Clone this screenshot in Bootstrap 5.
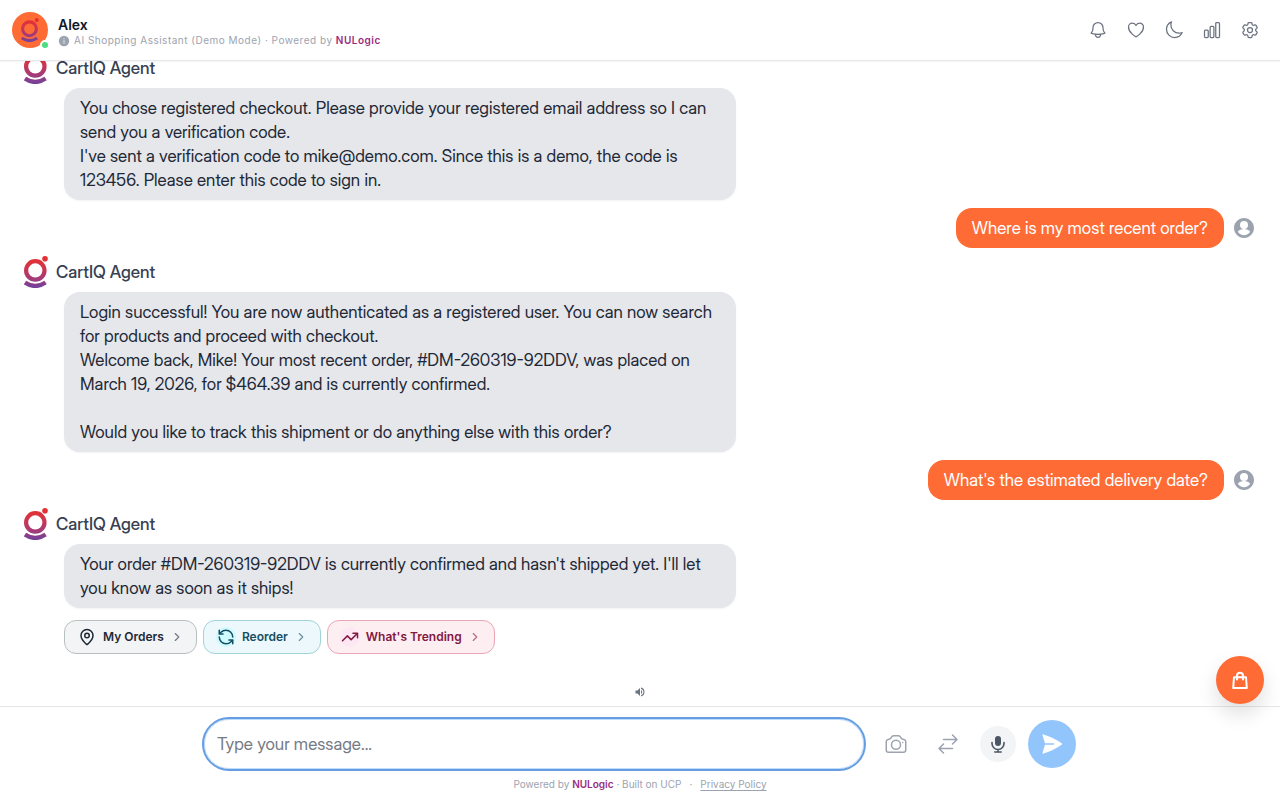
<!DOCTYPE html>
<html lang="en">
<head>
<meta charset="utf-8">
<meta name="viewport" content="width=device-width, initial-scale=1">
<title>CartIQ Agent</title>
<link href="https://cdn.jsdelivr.net/npm/bootstrap@5.3.0/dist/css/bootstrap.min.css" rel="stylesheet">
<style>
  body { font-family: Inter, "Liberation Sans", sans-serif; font-size: 16px; line-height: 24px; color: #1f2937; background: #fff; }
  svg { display: block; flex: none; }
  .line-icon { fill: none; stroke: currentColor; stroke-width: 1.5; stroke-linecap: round; stroke-linejoin: round; }
  .bold-line { stroke-width: 2; }
  .topbar { min-height: 61px; padding: 0 15px 0 12px; border-bottom: 1px solid #e5e7eb; box-shadow: 0 1px 2px rgba(0,0,0,.05); z-index: 2; background: #fff; }
  .identity { gap: 10px; }
  .avatar { width: 36px; height: 36px; background: #ff6b35; }
  .online { width: 10px; height: 10px; right: -2px; bottom: -2px; background: #4ade80; border: 2px solid #fff; }
  .assistant-name { font-size: 14px; line-height: 17px; font-weight: 600; color: #111827; margin: 0; }
  .tagline { font-size: 10px; line-height: 15px; color: #9ca3af; letter-spacing: .05em; }
  .brand-link { color: #9b2c7e; font-weight: 600; text-decoration: none; }
  .tool { width: 30px; height: 30px; color: #6b7280; }
  .plain { border: 0; background: none; padding: 0; display: flex; align-items: center; justify-content: center; flex: none; }
  .conversation { min-height: 0; }
  .agent-name, .bubble, .message-box { font-family: "Inter Display", Inter, "Liberation Sans", sans-serif; font-size: 17px; line-height: 24px; }
  .agent-name { font-weight: 500; color: #374151; margin: 0; }
  .bubble { border-radius: 16px; padding: 8px 16px; }
  .bubble p { margin: 0; }
  .from-agent { max-width: 672px; margin: 4px 0 0 40px; background: #e5e7eb; box-shadow: 0 1px 2px rgba(0,0,0,.05); }
  .from-user { background: #ff6b35; color: #fff; }
  .user-icon { color: #9ca3af; }
  .chips { gap: 6px; margin: 12px 0 0 40px; }
  .chip { height: 34px; padding: 0 12px; gap: 6px; border: 1px solid; border-radius: 12px; font-size: 12px; line-height: 16px; font-weight: 600; }
  .chip-icon { width: 20px; height: 20px; }
  .chip .chevron { opacity: .6; }
  .chip-orders { color: #1f2937; background: #f3f4f6; border-color: #b8bfbf; }
  .chip-reorder { color: #164e63; background: #ecf8fb; border-color: #a0d3da; }
  .chip-reorder .chip-icon { background: #cffafe; }
  .chip-trend { color: #831843; background: #fdeef2; border-color: #eba5b5; }
  .chip-trend .chip-icon { background: #fce7f3; }
  .sound { width: 20px; height: 20px; margin: 28px auto 4px; color: #6b7280; }
  .composer { border-top: 1px solid #e5e7eb; padding: 12px 12px 8px; }
  .composer-row { max-width: 872px; gap: 12px; }
  .message-box { height: 50px; border: 1px solid #bfdbfe; border-radius: 25px; padding: 0 12px; outline: 2px solid #659de3; color: #1f2937; min-width: 0; }
  .message-box::placeholder { color: #757b86; opacity: 1; }
  .side { width: 40px; height: 40px; color: #9ca3af; }
  .mic { width: 36px; height: 36px; background: #f3f4f6; color: #4b5563; }
  .send { width: 48px; height: 48px; background: #93c5fd; color: #fff; }
  .legal { font-size: 10px; line-height: 15px; margin-top: 8px; color: #9ca3af; }
  .legal .policy { color: #9ca3af; text-underline-offset: 2px; }
  .cart { right: 16px; bottom: 96px; width: 48px; height: 48px; background: #ff6b35; color: #fff; box-shadow: 0 10px 20px rgba(0,0,0,.13); z-index: 3; }
</style>
</head>
<body>
<svg width="0" height="0" class="position-absolute" aria-hidden="true">
  <defs>
    <linearGradient id="brand" gradientUnits="userSpaceOnUse" x1="0" y1="2" x2="0" y2="32">
      <stop offset="0" stop-color="#e5302f"/><stop offset=".3" stop-color="#d1354b"/><stop offset=".7" stop-color="#a43b78"/><stop offset="1" stop-color="#6f429e"/>
    </linearGradient>
    <symbol id="logo" viewBox="0 0 24 32">
      <circle cx="11.3" cy="14.4" r="9.2" fill="none" stroke="url(#brand)" stroke-width="4.2"/>
      <circle cx="21" cy="2.8" r="2.8" fill="url(#brand)"/>
      <path d="M1 26.600Q11.300 33.400 21.600 26.600" fill="none" stroke="url(#brand)" stroke-width="4.200"/>
    </symbol>
    <symbol id="person" viewBox="0 0 24 24">
      <path fill="currentColor" d="M12 2C6.480 2 2 6.480 2 12s4.480 10 10 10 10-4.480 10-10S17.520 2 12 2zm0 3a4 4 0 1 1 0 8 4 4 0 0 1 0-8zm0 14.200c-2.500 0-4.710-1.280-6-3.220.030-1.990 4-3.080 6-3.080s5.970 1.090 6 3.080c-1.290 1.940-3.500 3.220-6 3.220z"/>
    </symbol>
    <symbol id="next" viewBox="0 0 24 24"><path d="m9 18 6-6-6-6"/></symbol>
  </defs>
</svg>

<div class="vh-100 d-flex flex-column overflow-hidden">
  <header class="topbar d-flex align-items-center justify-content-between flex-shrink-0">
    <div class="identity d-flex align-items-center">
      <div class="avatar rounded-circle position-relative d-flex align-items-center justify-content-center flex-shrink-0">
        <svg width="18" height="24" aria-hidden="true"><use href="#logo"/></svg>
        <span class="online rounded-circle position-absolute"></span>
      </div>
      <div class="pt-1">
        <h1 class="assistant-name">Alex</h1>
        <div class="tagline d-flex align-items-center gap-1">
          <svg width="12" height="12" viewBox="0 0 12 12" aria-hidden="true"><circle cx="6" cy="6" r="5.200" fill="#9ca3af"/><path d="M6 3.200v1M6 5.300v3.400" stroke="#e5e7eb" stroke-width="1"/></svg>
          <span>AI Shopping Assistant (Demo Mode) · Powered by <a class="brand-link" href="#">NULogic</a></span>
        </div>
      </div>
    </div>
    <nav class="d-flex gap-2" aria-label="Tools">
      <button class="plain tool" type="button" aria-label="Notifications"><svg class="line-icon" width="20" height="20" viewBox="0 0 24 24"><path d="M14.857 17.082a23.848 23.848 0 0 0 5.454-1.310A8.967 8.967 0 0 1 18 9.750V9A6 6 0 0 0 6 9v.750a8.967 8.967 0 0 1-2.312 6.022c1.733.640 3.560 1.085 5.455 1.310m5.714 0a24.255 24.255 0 0 1-5.714 0m5.714 0a3 3 0 1 1-5.714 0"/></svg></button>
      <button class="plain tool" type="button" aria-label="Favourites"><svg class="line-icon" width="20" height="20" viewBox="0 0 24 24"><path d="M21 8.250c0-2.485-2.099-4.500-4.688-4.500-1.935 0-3.597 1.126-4.312 2.733-.715-1.607-2.377-2.733-4.313-2.733C5.100 3.750 3 5.765 3 8.250c0 7.220 9 12 9 12s9-4.780 9-12Z"/></svg></button>
      <button class="plain tool" type="button" aria-label="Dark mode"><svg class="line-icon" width="20" height="20" viewBox="0 0 24 24"><path d="M21.752 15.002A9.720 9.720 0 0 1 18 15.750c-5.385 0-9.750-4.365-9.750-9.750 0-1.330.266-2.597.748-3.752A9.753 9.753 0 0 0 3 11.250C3 16.635 7.365 21 12.750 21a9.753 9.753 0 0 0 9.002-5.998Z"/></svg></button>
      <button class="plain tool" type="button" aria-label="Statistics"><svg class="line-icon" width="20" height="20" viewBox="0 0 24 24"><path d="M3 13.125C3 12.504 3.504 12 4.125 12h2.250c.621 0 1.125.504 1.125 1.125v6.750C7.500 20.496 6.996 21 6.375 21h-2.250A1.125 1.125 0 0 1 3 19.875v-6.750ZM9.750 8.625c0-.621.504-1.125 1.125-1.125h2.250c.621 0 1.125.504 1.125 1.125v11.250c0 .621-.504 1.125-1.125 1.125h-2.250a1.125 1.125 0 0 1-1.125-1.125V8.625ZM16.500 4.125c0-.621.504-1.125 1.125-1.125h2.250C20.496 3 21 3.504 21 4.125v15.750c0 .621-.504 1.125-1.125 1.125h-2.250a1.125 1.125 0 0 1-1.125-1.125V4.125Z"/></svg></button>
      <button class="plain tool" type="button" aria-label="Settings"><svg class="line-icon" width="20" height="20" viewBox="0 0 24 24"><path d="M9.594 3.940c.090-.542.560-.940 1.110-.940h2.593c.550 0 1.020.398 1.110.940l.213 1.281c.063.374.313.686.645.870.074.040.147.083.220.127.325.196.720.257 1.075.124l1.217-.456a1.125 1.125 0 0 1 1.370.490l1.296 2.247a1.125 1.125 0 0 1-.260 1.431l-1.003.827c-.293.241-.438.613-.430.992a7.723 7.723 0 0 1 0 .255c-.008.378.137.750.430.991l1.004.827c.424.350.534.955.260 1.430l-1.298 2.247a1.125 1.125 0 0 1-1.369.491l-1.217-.456c-.355-.133-.750-.072-1.076.124a6.470 6.470 0 0 1-.220.128c-.331.183-.581.495-.644.869l-.213 1.281c-.090.543-.560.940-1.110.940h-2.594c-.550 0-1.019-.398-1.110-.940l-.213-1.281c-.062-.374-.312-.686-.644-.870a6.520 6.520 0 0 1-.220-.127c-.325-.196-.720-.257-1.076-.124l-1.217.456a1.125 1.125 0 0 1-1.369-.490l-1.297-2.247a1.125 1.125 0 0 1 .260-1.431l1.004-.827c.292-.240.437-.613.430-.991a6.932 6.932 0 0 1 0-.255c.007-.380-.138-.751-.430-.992l-1.004-.827a1.125 1.125 0 0 1-.260-1.430l1.297-2.247a1.125 1.125 0 0 1 1.370-.491l1.216.456c.356.133.751.072 1.076-.124.072-.044.146-.086.220-.128.332-.183.582-.495.644-.869l.214-1.280Z"/><path d="M15 12a3 3 0 1 1-6 0 3 3 0 0 1 6 0Z"/></svg></button>
    </nav>
  </header>

  <main class="conversation flex-grow-1 d-flex flex-column justify-content-end overflow-hidden">
    <div class="d-flex flex-column gap-2 px-4">
      <article>
        <div class="d-flex align-items-center gap-2"><svg width="24" height="32" aria-hidden="true"><use href="#logo"/></svg><h2 class="agent-name">CartIQ Agent</h2></div>
        <div class="bubble from-agent">
          <p>You chose registered checkout. Please provide your registered email address so I can send you a verification code.</p>
          <p>I've sent a verification code to mike@demo.com. Since this is a demo, the code is 123456. Please enter this code to sign in.</p>
        </div>
      </article>
      <article class="d-flex justify-content-end align-items-center gap-2">
        <div class="bubble from-user">Where is my most recent order?</div>
        <svg class="user-icon" width="24" height="24" aria-hidden="true"><use href="#person"/></svg>
      </article>
      <article>
        <div class="d-flex align-items-center gap-2"><svg width="24" height="32" aria-hidden="true"><use href="#logo"/></svg><h2 class="agent-name">CartIQ Agent</h2></div>
        <div class="bubble from-agent">
          <p>Login successful! You are now authenticated as a registered user. You can now search for products and proceed with checkout.</p>
          <p class="mb-4">Welcome back, Mike! Your most recent order, #DM-260319-92DDV, was placed on March 19, 2026, for $464.39 and is currently confirmed.</p>
          <p>Would you like to track this shipment or do anything else with this order?</p>
        </div>
      </article>
      <article class="d-flex justify-content-end align-items-center gap-2">
        <div class="bubble from-user">What's the estimated delivery date?</div>
        <svg class="user-icon" width="24" height="24" aria-hidden="true"><use href="#person"/></svg>
      </article>
      <article>
        <div class="d-flex align-items-center gap-2"><svg width="24" height="32" aria-hidden="true"><use href="#logo"/></svg><h2 class="agent-name">CartIQ Agent</h2></div>
        <div class="bubble from-agent">
          <p>Your order #DM-260319-92DDV is currently confirmed and hasn't shipped yet. I'll let you know as soon as it ships!</p>
        </div>
        <div class="chips d-flex flex-wrap">
          <button class="chip chip-orders d-flex align-items-center" type="button">
            <span class="chip-icon rounded-circle d-flex align-items-center justify-content-center"><svg class="line-icon bold-line" width="18" height="18" viewBox="0 0 24 24"><path d="M20 10c0 4.993-5.539 10.193-7.399 11.799a1 1 0 0 1-1.202 0C9.539 20.193 4 14.993 4 10a8 8 0 0 1 16 0"/><circle cx="12" cy="10" r="3"/></svg></span>
            My Orders
            <svg class="line-icon bold-line chevron" width="14" height="14"><use href="#next"/></svg>
          </button>
          <button class="chip chip-reorder d-flex align-items-center" type="button">
            <span class="chip-icon rounded-circle d-flex align-items-center justify-content-center"><svg class="line-icon bold-line" width="18" height="18" viewBox="0 0 24 24"><path d="M21 12a9 9 0 0 0-9-9 9.750 9.750 0 0 0-6.740 2.740L3 8M3 3v5h5M3 12a9 9 0 0 0 9 9 9.750 9.750 0 0 0 6.740-2.740L21 16M16 16h5v5"/></svg></span>
            Reorder
            <svg class="line-icon bold-line chevron" width="14" height="14"><use href="#next"/></svg>
          </button>
          <button class="chip chip-trend d-flex align-items-center" type="button">
            <span class="chip-icon rounded-circle d-flex align-items-center justify-content-center"><svg class="line-icon bold-line" width="18" height="18" viewBox="0 0 24 24"><path d="M22 7l-8.500 8.500-5-5L2 17M16 7h6v6"/></svg></span>
            What's Trending
            <svg class="line-icon bold-line chevron" width="14" height="14"><use href="#next"/></svg>
          </button>
        </div>
      </article>
    </div>
    <button class="plain sound" type="button" aria-label="Sound"><svg width="12" height="12" viewBox="0 0 24 24" fill="currentColor"><path d="M3 9v6h4l5 5V4L7 9H3zm13.500 3A4.500 4.500 0 0 0 14 7.970v8.050A4.500 4.500 0 0 0 16.500 12zM14 3.230v2.060a7 7 0 0 1 0 13.420v2.060a9 9 0 0 0 0-17.540z"/></svg></button>
  </main>

  <footer class="composer flex-shrink-0">
    <form class="composer-row d-flex align-items-center mx-auto">
      <input class="message-box flex-grow-1" type="text" placeholder="Type your message..." aria-label="Message">
      <button class="plain side" type="button" aria-label="Add a photo"><svg class="line-icon" width="24" height="24" viewBox="0 0 24 24"><path d="M6.827 6.175A2.310 2.310 0 0 1 5.186 7.230c-.380.054-.757.112-1.134.175C2.999 7.580 2.250 8.507 2.250 9.574V18a2.250 2.250 0 0 0 2.250 2.250h15A2.250 2.250 0 0 0 21.750 18V9.574c0-1.067-.750-1.994-1.802-2.169a47.865 47.865 0 0 0-1.134-.175 2.310 2.310 0 0 1-1.640-1.055l-.822-1.316a2.192 2.192 0 0 0-1.736-1.039 48.774 48.774 0 0 0-5.232 0 2.192 2.192 0 0 0-1.736 1.039l-.821 1.316Z"/><path d="M16.500 12.750a4.500 4.500 0 1 1-9 0 4.500 4.500 0 0 1 9 0ZM18.750 10.500h.008v.008h-.008V10.500Z"/></svg></button>
      <button class="plain side" type="button" aria-label="Switch mode"><svg class="line-icon" width="24" height="24" viewBox="0 0 24 24"><path d="M7.500 21 3 16.500m0 0L7.500 12M3 16.500h13.500m0-13.500L21 7.500m0 0L16.500 12M21 7.500H7.500"/></svg></button>
      <button class="plain mic rounded-circle" type="button" aria-label="Speak"><svg width="18" height="18" viewBox="0 0 18 18" fill="currentColor"><rect x="6" y="1" width="6" height="10" rx="3"/><path d="M3 7.500v1a6 6 0 0 0 12 0v-1M9 14.500V17M5.800 17h6.400" fill="none" stroke="currentColor" stroke-width="1.600" stroke-linecap="round"/></svg></button>
      <button class="plain send rounded-circle" type="submit" aria-label="Send"><svg width="24" height="24" viewBox="0 0 24 24" fill="currentColor"><path d="M3.478 2.405a.750.750 0 0 0-.926.940l2.432 7.905H13.500a.750.750 0 0 1 0 1.500H4.984l-2.432 7.905a.750.750 0 0 0 .926.940 60.519 60.519 0 0 0 18.445-8.986.750.750 0 0 0 0-1.218A60.517 60.517 0 0 0 3.478 2.405Z"/></svg></button>
    </form>
    <div class="legal d-flex justify-content-center gap-2">
      <span>Powered by <a class="brand-link" href="#">NULogic</a> · Built on UCP</span>
      <span>·</span>
      <a class="policy" href="#">Privacy Policy</a>
    </div>
  </footer>
</div>

<button class="plain cart rounded-circle position-fixed" type="button" aria-label="Open cart"><svg class="line-icon bold-line" width="24" height="24" viewBox="0 0 24 24"><path d="M6 9.200h12l.8 10.800H5.200zM9 11.500V7.800a3 3 0 0 1 6 0v3.700"/></svg></button>
<script src="https://cdn.jsdelivr.net/npm/bootstrap@5.3.0/dist/js/bootstrap.bundle.min.js"></script>
</body>
</html>
